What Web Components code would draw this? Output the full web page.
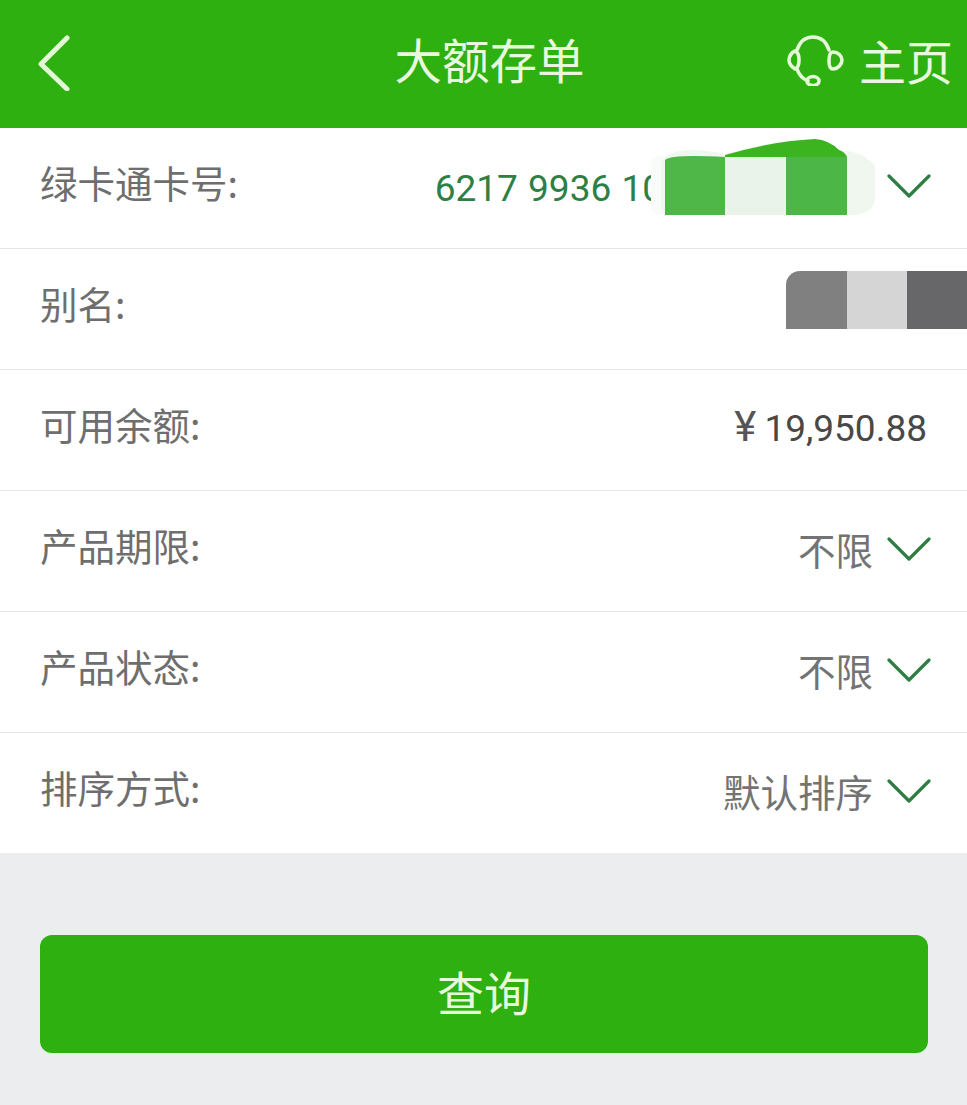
<!DOCTYPE html>
<html lang="zh-CN">
  <head>
    <meta charset="UTF-8" />
    <title>大额存单</title>
    <style>
      html,
      body {
        margin: 0;
        background: #ecedef;
      }
      body {
        font-family: "Noto Sans CJK SC", "Noto Sans", sans-serif;
        font-weight: 400;
      }
      .card-no {
        display: inline-block;
        margin: 0 210px 4px 0;
        color: #2f7f45;
        font-family: Roboto, sans-serif;
        font-size: 37px;
        word-spacing: 1px;
        white-space: nowrap;
      }
      .money {
        display: flex;
        align-items: baseline;
        gap: 8px;
        margin: 0 4px 2px 0;
        color: #484848;
        font-family: Roboto, sans-serif;
        font-size: 37px;
      }
      .money b {
        font: inherit;
        font-size: 42px;
        color: #555;
      }
    </style>
  </head>
  <body>
    <app-header title-text="大额存单" home-text="主页"></app-header>
    <form-card>
      <form-row label="绿卡通卡号:" arrow>
        <span class="card-no">6217 9936 10</span>
        <card-mask slot="mask"></card-mask>
      </form-row>
      <form-row label="别名:">
        <name-mask slot="mask"></name-mask>
      </form-row>
      <form-row label="可用余额:"><span class="money"><b>¥</b>19,950.88</span></form-row>
      <form-row label="产品期限:" arrow>不限</form-row>
      <form-row label="产品状态:" arrow>不限</form-row>
      <form-row label="排序方式:" arrow last>默认排序</form-row>
    </form-card>
    <query-button>查询</query-button>

    <script>
      // top green bar with back arrow, title and service/home link
      class AppHeader extends HTMLElement {
        connectedCallback() {
          this.attachShadow({ mode: "open" });
          this.shadowRoot.innerHTML = `
            <style>
              :host {
                display: grid;
                grid-template-columns: 1fr auto 1fr;
                align-items: center;
                height: 128px;
                background: #2db010;
                color: #e9f9df;
                font-size: 47.5px;
              }
              .back { padding-left: 36px; display: flex; margin-bottom: 2px; }
              h1 { margin: 0 0 12px 12px; font: inherit; }
              .home {
                justify-self: end;
                display: flex;
                align-items: center;
                gap: 13px;
                padding-right: 14px;
                font-size: 47px;
                margin-bottom: 9px;
              }
              svg { display: block; fill: none; stroke: #e4f8d8; }
            </style>
            <div class="back">
              <svg width="36" height="56" viewBox="0 0 36 56" stroke-width="5" stroke-linecap="round" stroke-linejoin="round">
                <path d="M31 3 5 29l26 25" />
              </svg>
            </div>
            <h1>${this.getAttribute("title-text")}</h1>
            <div class="home">
              <svg width="60" height="52" viewBox="7 9 60 52" stroke-width="3.6" stroke-linecap="round" stroke-linejoin="round">
                <path d="M18 25C21 16 27 12 34 12s13 4 16 13" />
                <path d="M16 26c-3 1-6 5-6 9s3 7 6 9c3-1 4-5 4-9s-1-8-4-9Z" />
                <path d="M54 27c5 0 9 4 9 8s-4 9-9 9c-3 0-4-4-4-8s1-9 4-9Z" />
                <path d="M18 44c2 6 6 10 11 12" />
                <ellipse cx="34" cy="56" rx="6" ry="4.5" />
              </svg>
              <span>${this.getAttribute("home-text")}</span>
            </div>
          `;
        }
      }
      customElements.define("app-header", AppHeader);

      // white block holding the rows
      class FormCard extends HTMLElement {
        connectedCallback() {
          this.attachShadow({ mode: "open" });
          this.shadowRoot.innerHTML = `
            <style>
              :host { display: block; background: #fff; }
            </style>
            <slot></slot>
          `;
        }
      }
      customElements.define("form-card", FormCard);

      // one label / value row, with optional chevron
      class FormRow extends HTMLElement {
        connectedCallback() {
          const arrow = this.hasAttribute("arrow");
          const last = this.hasAttribute("last");
          this.attachShadow({ mode: "open" });
          this.shadowRoot.innerHTML = `
            <style>
              :host {
                display: flex;
                position: relative;
                align-items: center;
                justify-content: space-between;
                box-sizing: border-box;
                height: ${last ? 120 : 121}px;
                padding: 0 36px 0 40px;
                border-bottom: ${last ? 0 : 1}px solid #e6e6e8;
                color: #6e6e6e;
                font-size: 37.5px;
              }
              .label { margin-bottom: 14px; }
              .value {
                display: flex;
                align-items: center;
                gap: 14px;
                color: #737373;
              }
              .value span { margin-bottom: 6px; }
              svg { display: block; fill: none; stroke: #2f7d43; margin-bottom: 4px; }
            </style>
            <span class="label">${this.getAttribute("label")}</span>
            <div class="value">
              <span><slot></slot></span>
              ${
                arrow
                  ? `<svg width="44" height="26" viewBox="0 0 44 26" stroke-width="3.2" stroke-linecap="round" stroke-linejoin="round"><path d="M2 3 22 23 42 3" /></svg>`
                  : ""
              }
            </div>
            <slot name="mask"></slot>
          `;
        }
      }
      customElements.define("form-row", FormRow);

      // hand-painted blur over the card number
      class CardMask extends HTMLElement {
        connectedCallback() {
          this.attachShadow({ mode: "open" });
          this.shadowRoot.innerHTML = `
            <style>
              :host {
                position: absolute;
                left: 651px;
                top: 10px;
                width: 226px;
                height: 78px;
              }
              svg { display: block; }
            </style>
            <svg width="226" height="78" viewBox="-8 0 226 78">
              <rect x="-8" y="18" width="24" height="59" rx="9" fill="#f8fbf7" />
              <path d="M2 70V26Q6 14 26 12 40 11 66 16 114 2 156 1 170 2 180 12 204 13 216 28V62Q214 76 194 77H10Q3 76 2 70Z" fill="#f0f7ee" />
              <path d="M66 17Q114 3 156 1 170 2 180 12 186 14 188 19H66Z" fill="#3bb41f" />
              <path d="M6 77V22Q12 16 66 19V77Z" fill="#4eb748" />
              <rect x="66" y="19" width="61" height="58" fill="#e9f3e9" />
              <rect x="127" y="19" width="61" height="58" fill="#4cb647" />
            </svg>
          `;
        }
      }
      customElements.define("card-mask", CardMask);

      // grey blocks hiding the alias
      class NameMask extends HTMLElement {
        connectedCallback() {
          this.attachShadow({ mode: "open" });
          this.shadowRoot.innerHTML = `
            <style>
              :host {
                position: absolute;
                right: 0;
                top: 22px;
                display: grid;
                grid-template-columns: 61px 60px 60px;
                height: 58px;
              }
              div:nth-of-type(1) {
                background: #808080;
                border-top-left-radius: 14px;
              }
              div:nth-of-type(2) { background: #d5d5d6; }
              div:nth-of-type(3) { background: #67676a; }
            </style>
            <div></div><div></div><div></div>
          `;
        }
      }
      customElements.define("name-mask", NameMask);

      // big green submit button
      class QueryButton extends HTMLElement {
        connectedCallback() {
          this.attachShadow({ mode: "open" });
          this.shadowRoot.innerHTML = `
            <style>
              :host {
                display: block;
                padding: 82px 39px 52px 40px;
              }
              button {
                display: block;
                width: 100%;
                height: 118px;
                padding: 0 0 8px;
                border: 0;
                border-radius: 12px;
                background: #2db010;
                color: #e9f9df;
                font: inherit;
                font-size: 47px;
              }
            </style>
            <button type="button"><slot></slot></button>
          `;
        }
      }
      customElements.define("query-button", QueryButton);
    </script>
  </body>
</html>
